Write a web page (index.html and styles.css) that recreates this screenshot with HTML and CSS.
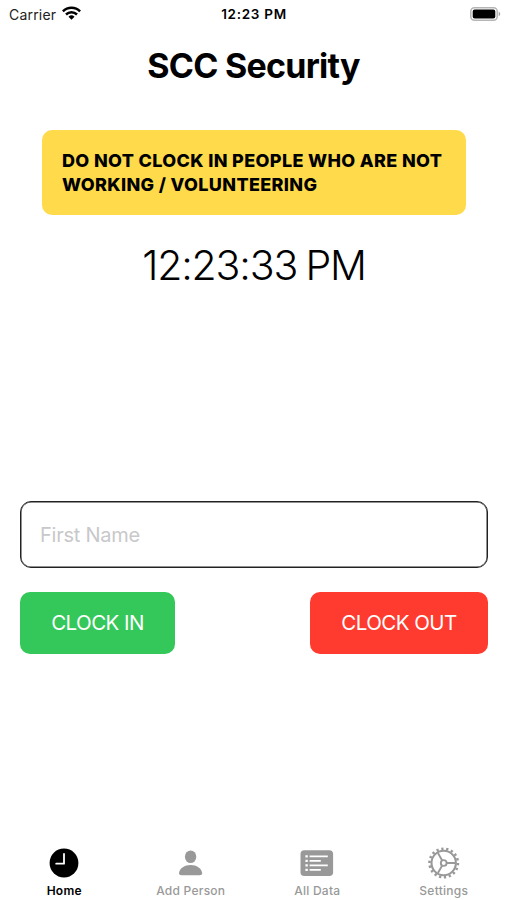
FILE: index.html
```html
<!DOCTYPE html>
<html lang="en">
<head>
<meta charset="utf-8">
<meta name="viewport" content="width=device-width, initial-scale=1">
<title>SCC Security</title>
<link rel="stylesheet" href="styles.css">
</head>
<body>
<div class="app">
  <header class="status">
    <div class="status-left">
      <span class="carrier">Carrier</span>
      <svg class="wifi" width="19" height="14" viewBox="0 0 19 14" fill="none" stroke="#000" stroke-width="2.5">
        <path d="M.9 5.3a12.3 12.3 0 0 1 17.2 0"/>
        <path d="M4 8.5a7.9 7.9 0 0 1 11 0"/>
        <path d="M9.5 13.8 6.5 10.8a4.3 4.3 0 0 1 6 0z" fill="#000" stroke="none"/>
      </svg>
    </div>
    <span class="status-time">12:23 PM</span>
    <div class="status-right">
      <svg width="31" height="14" viewBox="0 0 31 14">
        <rect x=".8" y=".8" width="26.4" height="12.4" rx="3.6" fill="#fff" stroke="#b5b5b5" stroke-width="1.5"/>
        <rect x="2.7" y="2.6" width="22.6" height="8.8" rx="2" fill="#000"/>
        <path d="M28.7 4.8c2 .7 2 3.7 0 4.4z" fill="#a5a5a5"/>
      </svg>
    </div>
  </header>
  <h1 class="title">SCC Security</h1>
  <main class="content">
    <p class="notice">DO NOT CLOCK IN PEOPLE WHO ARE NOT<br>WORKING / VOLUNTEERING</p>
    <time class="clock">12:23:33 PM</time>
    <form class="form">
      <input class="name" type="text" placeholder="First Name" aria-label="First Name">
      <div class="actions">
        <button class="btn in" type="button">CLOCK IN</button>
        <button class="btn out" type="button">CLOCK OUT</button>
      </div>
    </form>
  </main>
  <nav class="tabs">
    <a class="tab active">
      <svg width="36" height="36" viewBox="0 0 36 36">
        <circle cx="18" cy="18" r="14.4" fill="currentColor"/>
        <path d="M18 9v9.7h-7.800" fill="none" stroke="#fff" stroke-width="1.8" stroke-linecap="round" stroke-linejoin="round"/>
      </svg>
      <span>Home</span>
    </a>
    <a class="tab">
      <svg width="36" height="36" viewBox="0 0 36 36" fill="currentColor">
        <ellipse cx="17.600" cy="11.8" rx="5.7" ry="6.3"/>
        <path d="M8.700 30.3c-2.2 0-3-1.1-2.6-2.8.9-4 5.3-7.4 11.5-7.4s10.600 3.400 11.500 7.400c.4 1.700-.4 2.800-2.600 2.800z"/>
      </svg>
      <span>Add Person</span>
    </a>
    <a class="tab">
      <svg width="36" height="36" viewBox="0 0 36 36">
        <rect x="1.500" y="5.200" width="32.600" height="25.800" rx="3.800" fill="currentColor"/>
        <g stroke="#fff" stroke-width="1.700" fill="none">
          <path d="M6.400 11.400h2.400M6.400 15.900h2.400M6.400 20.400h2.400M6.400 24.900h2.400" stroke-width="2.200"/>
          <path d="M10.600 11.400h18.200M10.600 15.900h11.200M10.600 20.400h18.200M10.600 24.900h11.200"/>
        </g>
      </svg>
      <span>All Data</span>
    </a>
    <a class="tab">
      <svg width="36" height="36" viewBox="0 0 36 36" fill="none" stroke="currentColor">
        <circle cx="17.700" cy="18" r="12.200" stroke-width="2.100"/>
        <circle cx="17.700" cy="18" r="14.200" stroke-width="2.600" pathLength="180" stroke-dasharray="4.600 5.400"/>
        <circle cx="17.700" cy="18" r="2.900" stroke-width="1.900"/>
        <path d="M20.700 18h8.500M16.200 15.400 11.900 8M16.200 20.600 11.900 28" stroke-width="1.900"/>
      </svg>
      <span>Settings</span>
    </a>
  </nav>
</div>
</body>
</html>
```
FILE: styles.css
```css
* { box-sizing: border-box; }

body {
  margin: 0;
  background: #fff;
  color: #000;
  font-family: Inter, "Liberation Sans", sans-serif;
}

.app {
  display: flex;
  flex-direction: column;
  height: 900px;
  overflow: hidden;
}

.status {
  display: grid;
  grid-template-columns: 1fr auto 1fr;
  align-items: center;
  height: 27px;
  padding: 0 6px 0 9px;
  line-height: 27px;
}

.status-left { display: flex; align-items: center; gap: 6px; }
.carrier { color: #222; font-size: 14px; letter-spacing: .2px; }
.wifi { margin-top: -2px; }
.status-time { margin: 1px 2px 0 0; font-size: 13.5px; font-weight: 600; letter-spacing: .7px; }
.status-right { display: flex; justify-content: flex-end; }

.title {
  margin: 18px 0 0;
  font-size: 34px;
  line-height: 42px;
  font-weight: 700;
  letter-spacing: -.75px;
  text-align: center;
}

.content {
  display: flex;
  flex: 1;
  flex-direction: column;
  padding: 43px 19px 0 20px;
}

.notice {
  margin: 0 22px;
  height: 85px;
  padding: 18.5px 20px;
  border-radius: 10px;
  background: #ffda4b;
  font-size: 18px;
  line-height: 24.5px;
  font-weight: 800;
  letter-spacing: .35px;
  white-space: nowrap;
}

.clock {
  margin-top: 25px;
  font-size: 41px;
  line-height: 50px;
  font-weight: 300;
  letter-spacing: -1.15px;
  word-spacing: -2px;
  text-align: center;
}

.form { margin: 210.5px 0 0; }

.name {
  display: block;
  width: 100%;
  height: 67.5px;
  padding: 1px 19px 0;
  border: 1px solid #222;
  border-radius: 11px;
  background: #fff;
  box-shadow: inset 0 0 0 .5px #222;
  font: 400 20px Inter, sans-serif;
  letter-spacing: -.25px;
}

.name::placeholder { color: #c8c8ca; opacity: 1; }

.actions { display: flex; justify-content: space-between; margin-top: 23.5px; }

.btn {
  height: 62px;
  padding: 0;
  border: 0;
  border-radius: 10px;
  color: #fff;
  font: 400 20.5px Inter, sans-serif;
  letter-spacing: -.55px;
}

.in { width: 155px; background: #34c759; }
.out { width: 178px; background: #ff3b30; }

.tabs {
  display: grid;
  grid-template-columns: repeat(4, 1fr);
  height: 55px;
  padding-left: 1px;
}

.tab {
  display: flex;
  flex-direction: column;
  align-items: center;
  color: #999;
  font-size: 12px;
  line-height: 16px;
  font-weight: 500;
  letter-spacing: .25px;
}

.tab svg { margin-bottom: 2px; }
.active { color: #000; font-weight: 600; }
```
